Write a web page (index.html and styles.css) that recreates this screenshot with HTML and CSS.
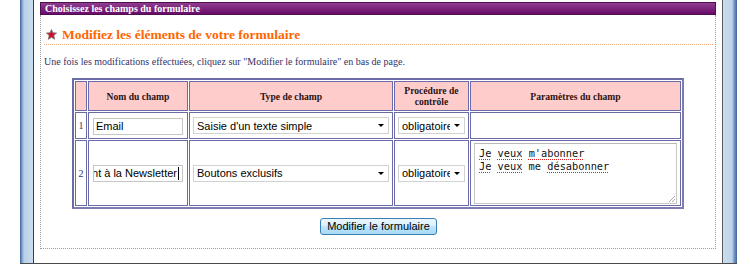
FILE: index.html
```html
<!doctype html>
<html lang="fr">
  <head>
    <meta charset="UTF-8" />
    <meta name="viewport" content="width=device-width, initial-scale=1.0" />
    <title>Modifier le formulaire</title>
    <link rel="stylesheet" href="styles.css">
  </head>
  <body>
    <div class="page">
      <div class="side side-left"></div>
      <div class="main">
        <div class="box">
          <div class="box-head">Choisissez les champs du formulaire</div>
          <div class="box-body">
            <h2 class="title">
              <svg class="star" width="11" height="11" viewBox="0 0 10 10">
                <polygon points="5,0.4 6.3,3.5 9.6,3.7 7.1,5.9 7.9,9.4 5,7.6 2.1,9.4 2.9,5.9 0.4,3.7 3.7,3.5" fill="#c8102e" stroke="#8a7a7a" stroke-width="0.8"/>
              </svg>
              Modifiez les éléments de votre formulaire
            </h2>
            <p class="intro">Une fois les modifications effectuées, cliquez sur "Modifier le formulaire" en bas de page.</p>

            <!-- tableau des champs -->
            <table class="fields">
              <tr class="head">
                <th class="c-num"></th>
                <th class="c-name">Nom du champ</th>
                <th class="c-type">Type de champ</th>
                <th class="c-check">Procédure de contrôle</th>
                <th>Paramètres du champ</th>
              </tr>
              <tr class="row-1">
                <td class="num">1</td>
                <td><input class="field" type="text" value="Email"></td>
                <td>
                  <span class="select">
                    <select><option>Saisie d'un texte simple</option></select>
                  </span>
                </td>
                <td>
                  <span class="select">
                    <select><option>obligatoire</option></select>
                  </span>
                </td>
                <td></td>
              </tr>
              <tr class="row-2">
                <td class="num">2</td>
                <td>
                  <div class="field scrolled"><span>Abonnement à la Newsletter</span><span class="caret"></span></div>
                </td>
                <td>
                  <span class="select">
                    <select><option>Boutons exclusifs</option></select>
                  </span>
                </td>
                <td>
                  <span class="select">
                    <select><option>obligatoire</option></select>
                  </span>
                </td>
                <td>
                  <div class="params"><span class="typo">Je</span> <span class="typo">veux</span> <span class="typo">m'abonner</span><br><span class="typo">Je</span> <span class="typo">veux</span> me <span class="typo">désabonner</span></div>
                </td>
              </tr>
            </table>

            <div class="actions">
              <button class="btn" type="button">Modifier le formulaire</button>
            </div>
          </div>
        </div>
      </div>
      <div class="side side-right"></div>
    </div>
  </body>
</html>
```

FILE: styles.css
```css
body {
  margin: 0;
  background: #fff;
  font-family: "Liberation Serif", "Times New Roman", serif;
}
.page {
  display: flex;
  margin-left: 20px;
  width: 717px;
  height: 263px;
  border-bottom: 1px solid #4a4a4a;
}
.side {
  width: 13px;
}
.side-left {
  background: linear-gradient(to right, #41639a 0, #7d9dca 2px, #b7cfe9 4px, #cadeef 100%);
  border-right: 1px solid #3c3c3c;
}
.side-right {
  width: 14px;
  background: linear-gradient(to right, #cadeef 0, #bcd3ea 9px, #7d9dca 11px, #41639a 100%);
  border-left: 1px solid #5a5a5a;
}
.main {
  flex: 1;
  background: #fff;
}
.box {
  margin: 2px 0 0 6px;
  width: 676px;
}
.box-head {
  height: 11px;
  padding-left: 4px;
  border: 1px solid #4d0f4d;
  background: linear-gradient(#8f3d8f, #6a0c6a);
  color: #fff;
  font-size: 10px;
  font-weight: bold;
  line-height: 11px;
}
.box-body {
  padding: 12px 2px 13px 3px;
  border: 1px dotted #9c9c9c;
  border-top: none;
}
.title {
  display: flex;
  align-items: center;
  gap: 5px;
  margin: 0;
  padding: 0 0 1px 2px;
  border-bottom: 1px dotted #f2a878;
  color: #ff6600;
  font-size: 13.5px;
  font-weight: bold;
  line-height: 16px;
}
.star {
  flex: none;
  margin-top: -1px;
}
.intro {
  margin: 11px 0 0;
  color: #333366;
  font-size: 10px;
  line-height: 12px;
}
.fields {
  margin: 10px 0 0 28px;
  width: 612px;
  table-layout: fixed;
  border-collapse: separate;
  border-spacing: 1px;
  border: 2px solid #6b6ba8;
  border-right-color: #7d7db4;
  border-bottom-color: #7d7db4;
}
.fields th,
.fields td {
  padding: 0 3px;
  border: 1px solid #6b6ba8;
  vertical-align: middle;
}
.fields th {
  background: #ffcccc;
  color: #2a1414;
  font-size: 9.6px;
  line-height: 11px;
}
.fields .c-num {
  width: 10px;
  padding: 0;
}
.c-name { width: 92px; }
.c-type { width: 196px; }
.c-check { width: 67px; }
.head { height: 30px; }
.row-1 { height: 27px; }
.row-2 { height: 66px; }
.fields td.num {
  padding: 0;
  text-align: center;
  color: #333366;
  font-size: 10px;
}
.field {
  box-sizing: border-box;
  width: 90px;
  height: 17px;
  margin: 0 0 0 1px;
  padding: 0 2px;
  border: 1px solid #c6c6c6;
  font-family: "Liberation Sans", Arial, sans-serif;
  font-size: 11px;
  color: #000;
  background: #fff;
}
.scrolled {
  display: flex;
  justify-content: flex-end;
  align-items: center;
  overflow: hidden;
  white-space: nowrap;
  padding-right: 3px;
}
.caret {
  flex: none;
  width: 1px;
  height: 13px;
  margin-left: 1px;
  background: #000;
}
.select {
  position: relative;
  display: block;
}
.select::after {
  content: "";
  position: absolute;
  right: 5px;
  top: 7px;
  border-left: 3px solid transparent;
  border-right: 3px solid transparent;
  border-top: 3px solid #000;
}
.select select {
  display: block;
  box-sizing: border-box;
  width: 100%;
  height: 17px;
  margin: 0;
  padding: 0 14px 0 3px;
  border: 1px solid #d2d2d2;
  border-radius: 0;
  background: #fff;
  appearance: none;
  font-family: "Liberation Sans", Arial, sans-serif;
  font-size: 11px;
  color: #000;
}
.params {
  position: relative;
  box-sizing: border-box;
  height: 61px;
  padding: 3px 4px;
  border: 1px solid #c8c8c8;
  border-top-color: #b8b8b8;
  font-family: "DejaVu Sans Mono", monospace;
  font-size: 10.3px;
  line-height: 13px;
  color: #111;
}
.params::after {
  content: "";
  position: absolute;
  right: 1px;
  bottom: 1px;
  width: 6px;
  height: 6px;
  background: linear-gradient(135deg, transparent 45%, #aaa 45%, #aaa 55%, transparent 55%, transparent 70%, #aaa 70%, #aaa 80%, transparent 80%);
}
.typo {
  text-decoration: underline dotted #e02020;
  text-underline-offset: 2px;
}
.actions {
  display: flex;
  justify-content: center;
  margin-top: 9px;
}
.btn {
  height: 17px;
  padding: 0 6px;
  border: 1px solid #3c7fb1;
  border-radius: 3px;
  background: linear-gradient(#eaf6fd 0, #d9f0fc 50%, #bee6fd 50%, #a7d9f5 100%);
  font-family: "Liberation Sans", Arial, sans-serif;
  font-size: 11px;
  line-height: 15px;
  color: #000;
}
```
